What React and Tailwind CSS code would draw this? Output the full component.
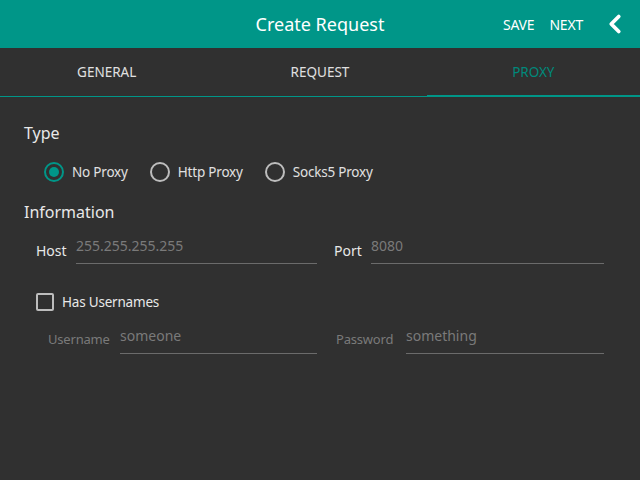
import { ChevronLeft } from "lucide-react";

const Radio = ({ label, checked }) => (
  <div className="flex items-center gap-[8px]">
    <div
      className={
        "size-[20px] rounded-full border-2 flex items-center justify-center " +
        (checked ? "border-[#009688]" : "border-[#bdbdbd]")
      }
    >
      {checked && <div className="size-[10px] rounded-full bg-[#009688]" />}
    </div>
    <span className="text-[13.5px] tracking-[-0.2px] text-[#e0e0e0]">{label}</span>
  </div>
);

const Field = ({ label, value, labelClass, inputWidth }) => (
  <div className="flex items-end">
    <span className={labelClass}>{label}</span>
    <div className={"border-b border-[#6b6b6b] pb-[6px] " + inputWidth}>
      <span className="text-[14px] text-[#7a7a7a] leading-[20px]">{value}</span>
    </div>
  </div>
);

export default function App() {
  return (
    <div
      className="w-[640px] h-[480px] bg-[#303030] flex flex-col overflow-hidden"
      style={{ fontFamily: '"Noto Sans", "Open Sans", sans-serif' }}
    >
      <header className="h-[48px] bg-[#009688] flex items-center relative shrink-0">
        <h1 className="w-full text-center text-[18px] text-white">Create Request</h1>
        <div className="absolute right-0 top-0 h-full flex items-center">
          <span className="text-[14px] tracking-[-0.2px] text-white mr-[15px]">SAVE</span>
          <span className="text-[14px] tracking-[-0.2px] text-white mr-[17px]">NEXT</span>
          <ChevronLeft className="text-white mr-[10px]" size={30} strokeWidth={3} />
        </div>
      </header>
      <nav className="h-[49px] flex border-b border-[#009688] shrink-0">
        <div className="flex-1 flex items-center justify-center text-[13.5px] text-[#e0e0e0]">GENERAL</div>
        <div className="flex-1 flex items-center justify-center text-[13.5px] text-[#e0e0e0]">REQUEST</div>
        <div className="flex-1 flex items-center justify-center text-[13.5px] text-[#00897b] border-b-2 border-[#009688] mb-[-1px] pt-[2px]">
          PROXY
        </div>
      </nav>
      <main className="px-[24px] pt-[26px] flex flex-col">
        <div className="text-[16px] text-[#e8e8e8] leading-[20px]">Type</div>
        <div className="flex gap-[22px] pl-[20px] mt-[19px]">
          <Radio label="No Proxy" checked />
          <Radio label="Http Proxy" />
          <Radio label="Socks5 Proxy" />
        </div>
        <div className="text-[16px] text-[#e8e8e8] leading-[20px] mt-[20px]">Information</div>
        <div className="flex pl-[12px] mt-[11px]">
          <Field
            label="Host"
            value="255.255.255.255"
            labelClass="text-[14px] text-[#e8e8e8] w-[40px] mb-[3px]"
            inputWidth="w-[241px]"
          />
          <div className="w-[17px]" />
          <Field
            label="Port"
            value="8080"
            labelClass="text-[14px] text-[#e8e8e8] w-[37px] mb-[3px]"
            inputWidth="w-[233px]"
          />
        </div>
        <div className="flex items-center gap-[8px] pl-[12px] mt-[28px]">
          <div className="size-[18px] rounded-[2px] border-2 border-[#bdbdbd]" />
          <span className="text-[13.5px] tracking-[-0.2px] text-[#e8e8e8]">Has Usernames</span>
        </div>
        <div className="flex pl-[24px] mt-[10px]">
          <Field
            label="Username"
            value="someone"
            labelClass="text-[13px] tracking-[-0.2px] text-[#7a7a7a] w-[72px] mb-[4px]"
            inputWidth="w-[197px]"
          />
          <div className="w-[19px]" />
          <Field
            label="Password"
            value="something"
            labelClass="text-[13px] tracking-[-0.2px] text-[#7a7a7a] w-[70px] mb-[4px]"
            inputWidth="w-[198px]"
          />
        </div>
      </main>
    </div>
  );
}
